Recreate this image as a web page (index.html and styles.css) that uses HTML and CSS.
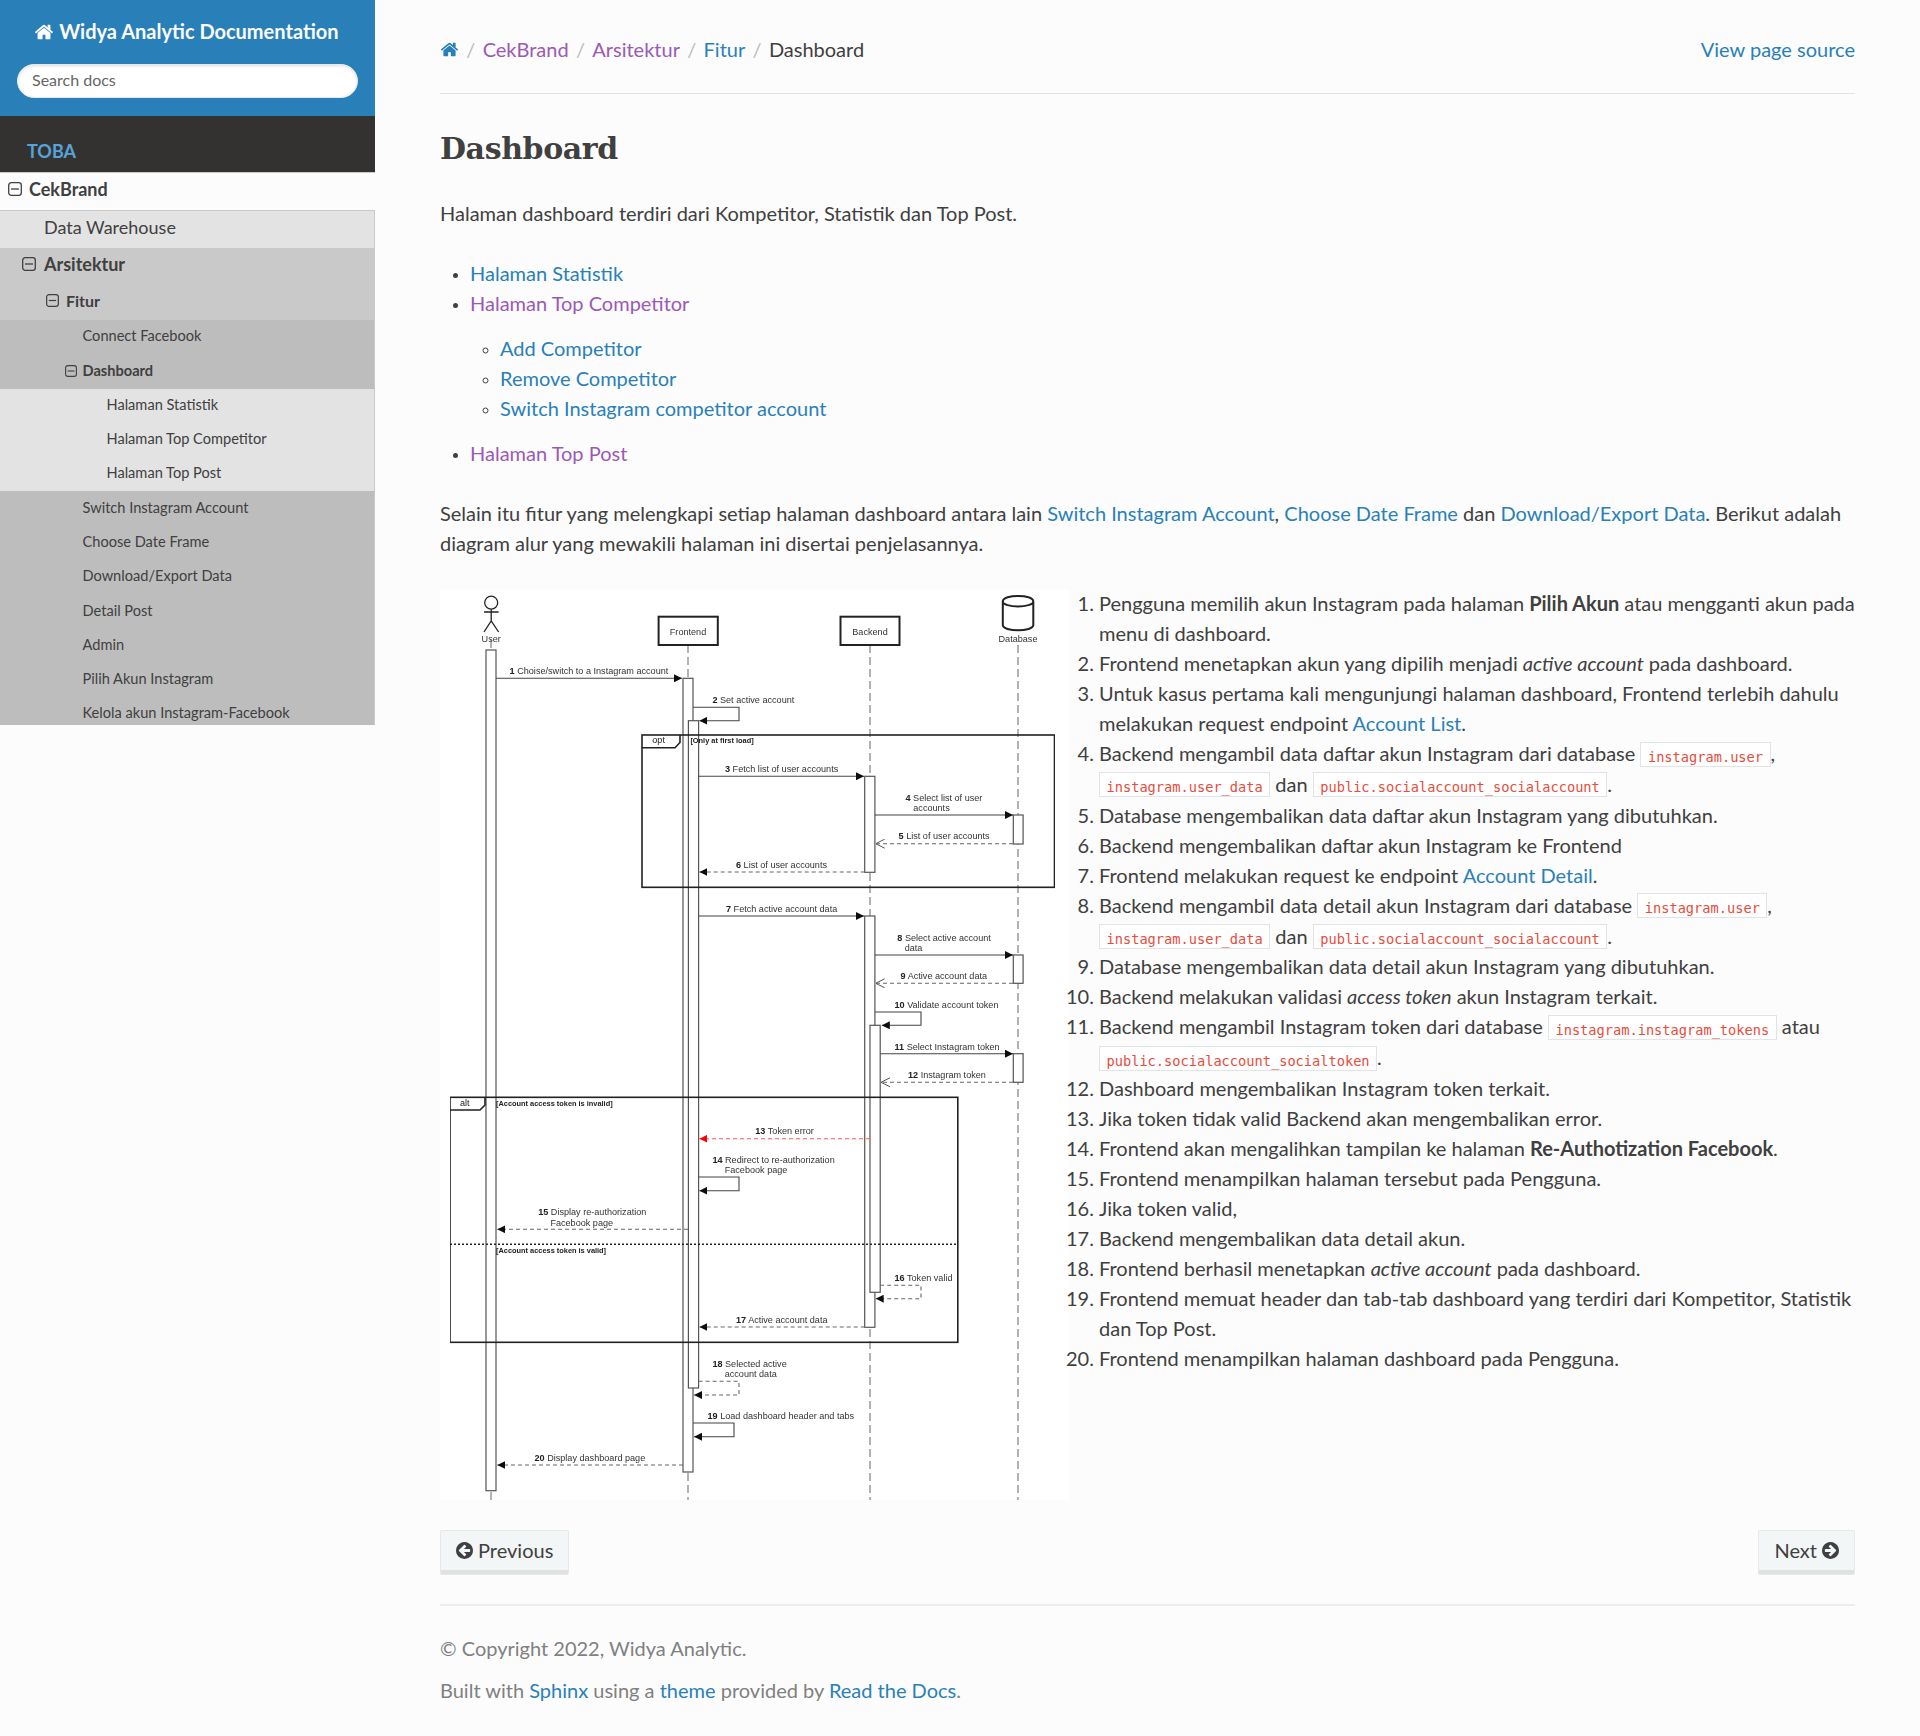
FILE: index.html

```html
<!DOCTYPE html>
<html lang="en">
<head>
    <meta charset="UTF-8">
    <meta name="viewport" content="width=device-width, initial-scale=1.0">
    <title>Dashboard - Widya Analytic Documentation</title>
    <link rel="stylesheet" href="styles.css">
</head>
<body>
  <svg class="defs">
    <symbol id="i-minus" viewBox="0 0 14 14">
      <rect x="0.7" y="0.7" width="12.6" height="12.6" rx="2.6" fill="none" stroke="currentColor" stroke-width="1.3"/>
      <path d="M3 7h8" stroke="currentColor" stroke-width="1.3"/>
    </symbol>
    <symbol id="i-home" viewBox="0 0 1792 1792">
      <path fill="currentColor" d="M1472 992v480q0 26-19 45t-45 19h-384v-384h-256v384h-384q-26 0-45-19t-19-45v-480q0-1 .5-3t.5-3l575-474 575 474q1 2 1 6zm223-69l-62 74q-8 9-21 11h-3q-13 0-21-7l-692-577-692 577q-12 8-24 7-13-2-21-11l-62-74q-8-10-7-23.5t11-21.5l719-599q32-26 76-26t76 26l244 204v-195q0-14 9-23t23-9h192q14 0 23 9t9 23v408l219 182q10 8 11 21.5t-7 23.5z"/>
    </symbol>
  </svg>

  <div class="sidebar">
    <div class="side-search">
      <a class="brand" href="#"><svg class="brand-icon"><use href="#i-home"/></svg> Widya Analytic Documentation</a>
      <input class="search-input" type="text" placeholder="Search docs">
    </div>
    <div class="side-menu">
      <p class="caption">TOBA</p>
      <a class="row l1" href="#"><svg class="toggle"><use href="#i-minus"/></svg>CekBrand</a>
      <a class="row l2 plain" href="#">Data Warehouse</a>
      <a class="row l2" href="#"><svg class="toggle"><use href="#i-minus"/></svg>Arsitektur</a>
      <a class="row l3" href="#"><svg class="toggle"><use href="#i-minus"/></svg>Fitur</a>
      <a class="row l4" href="#">Connect Facebook</a>
      <a class="row l4 open" href="#"><svg class="toggle"><use href="#i-minus"/></svg>Dashboard</a>
      <a class="row l5" href="#">Halaman Statistik</a>
      <a class="row l5" href="#">Halaman Top Competitor</a>
      <a class="row l5" href="#">Halaman Top Post</a>
      <a class="row l4" href="#">Switch Instagram Account</a>
      <a class="row l4" href="#">Choose Date Frame</a>
      <a class="row l4" href="#">Download/Export Data</a>
      <a class="row l4" href="#">Detail Post</a>
      <a class="row l4" href="#">Admin</a>
      <a class="row l4" href="#">Pilih Akun Instagram</a>
      <a class="row l4" href="#">Kelola akun Instagram-Facebook</a>
    </div>
  </div>

  <div class="content">
    <div class="crumbs">
      <a href="#" class="crumb-home"><svg class="crumb-icon"><use href="#i-home"/></svg></a>
      <span class="sep">/</span>
      <a href="#" class="visited">CekBrand</a>
      <span class="sep">/</span>
      <a href="#" class="visited">Arsitektur</a>
      <span class="sep">/</span>
      <a href="#">Fitur</a>
      <span class="sep">/</span>
      <span>Dashboard</span>
      <a href="#" class="source">View page source</a>
    </div>
    <hr class="rule">

    <h1>Dashboard</h1>
    <p>Halaman dashboard terdiri dari Kompetitor, Statistik dan Top Post.</p>

    <ul class="links">
      <li><a href="#">Halaman Statistik</a></li>
      <li><a href="#" class="visited">Halaman Top Competitor</a>
        <ul>
          <li><a href="#">Add Competitor</a></li>
          <li><a href="#">Remove Competitor</a></li>
          <li><a href="#">Switch Instagram competitor account</a></li>
        </ul>
      </li>
      <li><a href="#" class="visited">Halaman Top Post</a></li>
    </ul>

    <p>Selain itu fitur yang melengkapi setiap halaman dashboard antara lain <a href="#">Switch Instagram Account</a>, <a href="#">Choose Date Frame</a> dan <a href="#">Download/Export Data</a>. Berikut adalah diagram alur yang mewakili halaman ini disertai penjelasannya.</p>

    <div class="flow">
      <svg class="seq" viewBox="440 590 629 910" role="img" aria-label="Sequence diagram">
        <defs>
          <filter id="soft" x="0" y="0" width="100%" height="100%"><feGaussianBlur stdDeviation="0.35"/></filter>
          <marker id="solid" viewBox="0 0 8 8" refX="8" refY="4" markerWidth="8" markerHeight="8" markerUnits="userSpaceOnUse" orient="auto"><path d="M0 0L8 4L0 8z" fill="#111"/></marker>
          <marker id="red" viewBox="0 0 8 8" refX="8" refY="4" markerWidth="8" markerHeight="8" markerUnits="userSpaceOnUse" orient="auto"><path d="M0 0L8 4L0 8z" fill="#f00"/></marker>
          <marker id="open" viewBox="0 0 9 10" refX="9" refY="5" markerWidth="9" markerHeight="10" markerUnits="userSpaceOnUse" orient="auto"><path d="M0 0.5L9 5L0 9.5" fill="none" stroke="#555" stroke-width="1"/></marker>
        </defs>
        <g filter="url(#soft)">
          <!-- lifelines -->
          <path class="life" d="M491 640V1501M688 645V1501M870 645V1501M1018 645V1501"/>

          <!-- actors -->
          <circle class="shape" cx="491.2" cy="602.7" r="6.5"/>
          <path class="shape" d="M491.2 609.2V621M484 612H498.6M484 632L491.2 621L498.6 632"/>
          <text class="lbl" x="491.2" y="642" text-anchor="middle">User</text>
          <rect class="box" x="658.6" y="616.7" width="59.2" height="28.3"/>
          <text class="lbl" x="688" y="635" text-anchor="middle">Frontend</text>
          <rect class="box" x="840.5" y="616.7" width="59" height="28.3"/>
          <text class="lbl" x="870" y="635" text-anchor="middle">Backend</text>
          <path class="box" d="M1002.8 601.5V625C1002.8 632 1033.3 632 1033.3 625V601.5C1033.3 594 1002.8 594 1002.8 601.5C1002.8 608 1033.3 608 1033.3 601.5"/>
          <text class="lbl" x="1018" y="642" text-anchor="middle">Database</text>

          <!-- activations -->
          <rect class="act" x="486" y="650" width="10" height="840.7"/>
          <rect class="act" x="683" y="678.3" width="10" height="793.7"/>
          <rect class="act" x="688.4" y="720.7" width="10.2" height="667.3"/>
          <rect class="act" x="864.7" y="776.3" width="10.2" height="96"/>
          <rect class="act" x="1013.3" y="815" width="9.8" height="29"/>
          <rect class="act" x="864.7" y="916" width="10.2" height="411.3"/>
          <rect class="act" x="1013.3" y="955" width="9.8" height="28.3"/>
          <rect class="act" x="870" y="1025.3" width="10.2" height="267"/>
          <rect class="act" x="1013.3" y="1053.7" width="9.8" height="28.6"/>

          <!-- frames -->
          <rect class="frame" x="642" y="735" width="412.5" height="152.3"/>
          <path class="frame" d="M642 747.7H675L680 742.5V735"/>
          <text class="lbl tag" x="658.6" y="743.3" text-anchor="middle">opt</text>
          <text class="lbl guard" x="690.4" y="743.3">[Only at first load]</text>
          <rect class="frame" x="450" y="1097.3" width="507.8" height="245"/>
          <path class="frame" d="M450 1110H480L485 1105V1097.3"/>
          <text class="lbl tag" x="464.7" y="1105.7" text-anchor="middle">alt</text>
          <text class="lbl guard" x="496" y="1105.7">[Account access token is invalid]</text>
          <path class="dots" d="M450 1244.3H957.8"/>
          <text class="lbl guard" x="496" y="1253.3">[Account access token is valid]</text>

          <!-- messages -->
          <path class="msg" d="M496 678.3H682" marker-end="url(#solid)"/>
          <text class="lbl" x="509.6" y="674"><tspan class="num">1</tspan> Choise/switch to a Instagram account</text>
          <path class="msg" d="M693 707.3H739V720.7H699.4" marker-end="url(#solid)"/>
          <text class="lbl" x="712.4" y="703"><tspan class="num">2</tspan> Set active account</text>
          <path class="msg" d="M698.6 776.3H864" marker-end="url(#solid)"/>
          <text class="lbl" x="725" y="772.3"><tspan class="num">3</tspan> Fetch list of user accounts</text>
          <path class="msg" d="M875 815H1013" marker-end="url(#solid)"/>
          <text class="lbl" x="905.5" y="800.7"><tspan class="num">4</tspan> Select list of user</text>
          <text class="lbl" x="913.3" y="810.7">accounts</text>
          <path class="ret" d="M1013 843.7H875.7" marker-end="url(#open)"/>
          <text class="lbl" x="898.6" y="839.3"><tspan class="num">5</tspan> List of user accounts</text>
          <path class="ret" d="M864.7 872H699.4" marker-end="url(#solid)"/>
          <text class="lbl" x="736" y="868.3"><tspan class="num">6</tspan> List of user accounts</text>
          <path class="msg" d="M698.6 916H864" marker-end="url(#solid)"/>
          <text class="lbl" x="726" y="912.3"><tspan class="num">7</tspan> Fetch active account data</text>
          <path class="msg" d="M875 955H1013" marker-end="url(#solid)"/>
          <text class="lbl" x="897.3" y="940.7"><tspan class="num">8</tspan> Select active account</text>
          <text class="lbl" x="904.7" y="950.7">data</text>
          <path class="ret" d="M1013 983.3H875.7" marker-end="url(#open)"/>
          <text class="lbl" x="900.6" y="979.3"><tspan class="num">9</tspan> Active account data</text>
          <path class="msg" d="M875 1012H921V1025.3H881.8" marker-end="url(#solid)"/>
          <text class="lbl" x="894.5" y="1008"><tspan class="num">10</tspan> Validate account token</text>
          <path class="msg" d="M880.2 1053.7H1013" marker-end="url(#solid)"/>
          <text class="lbl" x="894.5" y="1050"><tspan class="num">11</tspan> Select Instagram token</text>
          <path class="ret" d="M1013 1082.3H881" marker-end="url(#open)"/>
          <text class="lbl" x="908" y="1078.3"><tspan class="num">12</tspan> Instagram token</text>
          <path class="ret err" d="M870 1138.7H699.4" marker-end="url(#red)"/>
          <text class="lbl" x="755.3" y="1134.3"><tspan class="num">13</tspan> Token error</text>
          <path class="msg" d="M698.6 1177H739V1190.7H699.4" marker-end="url(#solid)"/>
          <text class="lbl" x="712.4" y="1163.3"><tspan class="num">14</tspan> Redirect to re-authorization</text>
          <text class="lbl" x="724.7" y="1173.3">Facebook page</text>
          <path class="ret" d="M688 1229.3H497.3" marker-end="url(#solid)"/>
          <text class="lbl" x="538.2" y="1215"><tspan class="num">15</tspan> Display re-authorization</text>
          <text class="lbl" x="550.4" y="1225.7">Facebook page</text>
          <path class="ret" d="M880.2 1285.3H921V1298.7H875.7" marker-end="url(#solid)"/>
          <text class="lbl" x="894.5" y="1281"><tspan class="num">16</tspan> Token valid</text>
          <path class="ret" d="M864.7 1327H699.4" marker-end="url(#solid)"/>
          <text class="lbl" x="736" y="1323.3"><tspan class="num">17</tspan> Active account data</text>
          <path class="ret" d="M698.6 1381.3H739V1395H694" marker-end="url(#solid)"/>
          <text class="lbl" x="712.4" y="1367.3"><tspan class="num">18</tspan> Selected active</text>
          <text class="lbl" x="724.7" y="1377.3">account data</text>
          <path class="msg" d="M693 1423H734V1436.7H694" marker-end="url(#solid)"/>
          <text class="lbl" x="707.5" y="1419.3"><tspan class="num">19</tspan> Load dashboard header and tabs</text>
          <path class="ret" d="M683 1465H497.3" marker-end="url(#solid)"/>
          <text class="lbl" x="534.5" y="1461"><tspan class="num">20</tspan> Display dashboard page</text>
        </g>
      </svg>

      <ol class="steps">
        <li>Pengguna memilih akun Instagram pada halaman <strong>Pilih Akun</strong> atau mengganti akun pada menu di dashboard.</li>
        <li>Frontend menetapkan akun yang dipilih menjadi <em>active account</em> pada dashboard.</li>
        <li>Untuk kasus pertama kali mengunjungi halaman dashboard, Frontend terlebih dahulu melakukan request endpoint <a href="#">Account List</a>.</li>
        <li>Backend mengambil data daftar akun Instagram dari database <code>instagram.user</code>, <code>instagram.user_data</code> dan <code>public.socialaccount_socialaccount</code>.</li>
        <li>Database mengembalikan data daftar akun Instagram yang dibutuhkan.</li>
        <li>Backend mengembalikan daftar akun Instagram ke Frontend</li>
        <li>Frontend melakukan request ke endpoint <a href="#">Account Detail</a>.</li>
        <li>Backend mengambil data detail akun Instagram dari database <code>instagram.user</code>, <code>instagram.user_data</code> dan <code>public.socialaccount_socialaccount</code>.</li>
        <li>Database mengembalikan data detail akun Instagram yang dibutuhkan.</li>
        <li>Backend melakukan validasi <em>access token</em> akun Instagram terkait.</li>
        <li>Backend mengambil Instagram token dari database <code>instagram.instagram_tokens</code> atau <code>public.socialaccount_socialtoken</code>.</li>
        <li>Dashboard mengembalikan Instagram token terkait.</li>
        <li>Jika token tidak valid Backend akan mengembalikan error.</li>
        <li>Frontend akan mengalihkan tampilan ke halaman <strong>Re-Authotization Facebook</strong>.</li>
        <li>Frontend menampilkan halaman tersebut pada Pengguna.</li>
        <li>Jika token valid,</li>
        <li>Backend mengembalikan data detail akun.</li>
        <li>Frontend berhasil menetapkan <em>active account</em> pada dashboard.</li>
        <li>Frontend memuat header dan tab-tab dashboard yang terdiri dari Kompetitor, Statistik dan Top Post.</li>
        <li>Frontend menampilkan halaman dashboard pada Pengguna.</li>
      </ol>
    </div>

    <div class="pager">
      <a href="#" class="btn">
        <svg class="btn-icon" viewBox="0 128 1536 1536"><path fill="currentColor" d="M1280 960v-128q0-26-19-45t-45-19h-502l189-189q19-19 19-45t-19-45l-91-91q-18-18-45-18t-45 18l-362 362-91 91q-18 18-18 45t18 45l91 91 362 362q18 18 45 18t45-18l91-91q18-18 18-45t-18-45l-189-189h502q26 0 45-19t19-45zm256-64q0 209-103 385.5t-279.5 279.5-385.5 103-385.5-103-279.5-279.5-103-385.5 103-385.5 279.5-279.5 385.5-103 385.5 103 279.5 279.5 103 385.5z"/></svg>
        Previous
      </a>
      <a href="#" class="btn">
        Next
        <svg class="btn-icon" viewBox="0 128 1536 1536"><path fill="currentColor" d="M1285 896q0-27-18-45l-91-91-362-362q-18-18-45-18t-45 18l-91 91q-18 18-18 45t18 45l189 189h-502q-26 0-45 19t-19 45v128q0 26 19 45t45 19h502l-189 189q-19 19-19 45t19 45l91 91q18 18 45 18t45-18l362-362 91-91q18-18 18-45zm251 0q0 209-103 385.5t-279.5 279.5-385.5 103-385.5-103-279.5-279.5-103-385.5 103-385.5 279.5-279.5 385.5-103 385.5 103 279.5 279.5 103 385.5z"/></svg>
      </a>
    </div>
    <hr class="rule foot-rule">

    <div class="footer">
      <p>&copy; Copyright 2022, Widya Analytic.</p>
      <p>Built with <a href="#">Sphinx</a> using a <a href="#">theme</a> provided by <a href="#">Read the Docs</a>.</p>
    </div>
  </div>
</body>
</html>
```

FILE: styles.css

```css
* {
    box-sizing: border-box;
}

body {
    margin: 0;
    display: flex;
    align-items: flex-start;
    min-height: 1736px;
    background-color: #fcfcfc;
    color: #404040;
    font-family: 'Lato', sans-serif;
    font-size: 20px;
    line-height: 30px;
}

a {
    color: #2980b9;
    text-decoration: none;
}

a.visited {
    color: #9b59b6;
}

.defs {
    position: absolute;
    width: 0;
    height: 0;
}

/* sidebar */
.sidebar {
    width: 375px;
    flex-shrink: 0;
}

.side-search {
    height: 116px;
    padding: 16px 17px 0;
    background-color: #2980b9;
    text-align: center;
}

.brand {
    display: block;
    margin: 0 2px 18px 0;
    color: #fcfcfc;
    font-size: 20px;
    font-weight: 700;
    line-height: 30px;
}

.brand-icon {
    width: 20px;
    height: 20px;
    vertical-align: -3px;
}

.search-input {
    display: block;
    width: 100%;
    height: 34px;
    padding: 0 14px 4px;
    border: 1px solid #e8e8e8;
    border-radius: 17px;
    background-color: #fff;
    box-shadow: inset 0 1px 3px #ddd;
    font-family: 'Lato', sans-serif;
    font-size: 16px;
    color: #404040;
}

.search-input::placeholder {
    color: #666;
    opacity: 1;
}

.side-menu {
    height: 609px;
    overflow: hidden;
}

.caption {
    height: 56px;
    margin: 0;
    padding: 20px 0 0 27px;
    background-color: #343131;
    color: #55a5d9;
    font-size: 18px;
    font-weight: 700;
    line-height: 30px;
}

.row {
    display: flex;
    align-items: center;
    padding-bottom: 4px;
    color: #404040;
    border-right: 1px solid #c9c9c9;
}

.toggle {
    flex-shrink: 0;
}

.l1 {
    height: 39px;
    padding-left: 8px;
    padding-bottom: 5px;
    gap: 7px;
    background-color: #fcfcfc;
    border-top: 1px solid #c9c9c9;
    border-bottom: 1px solid #c9c9c9;
    border-right: 0;
    font-size: 18px;
    font-weight: 700;
}

.l1 .toggle {
    width: 14px;
    height: 14px;
}

.l2 {
    height: 37px;
    padding-left: 22px;
    padding-bottom: 5px;
    gap: 8px;
    background-color: #c9c9c9;
    font-size: 18px;
    font-weight: 700;
}

.l2 .toggle {
    width: 14px;
    height: 14px;
}

.l2.plain {
    padding-left: 44px;
    background-color: #e3e3e3;
    font-weight: 400;
}

.l3 {
    height: 35px;
    padding-left: 46px;
    gap: 7px;
    background-color: #c9c9c9;
    font-size: 16px;
    font-weight: 700;
}

.l3 .toggle {
    width: 13px;
    height: 13px;
}

.l4 {
    height: 34.3px;
    padding-left: 82.5px;
    padding-bottom: 1.9px;
    background-color: #bdbdbd;
    font-size: 14.6px;
    font-weight: 400;
}

.l4.open {
    padding-left: 65px;
    gap: 5.5px;
    font-weight: 700;
}

.l4 .toggle {
    width: 12px;
    height: 12px;
}

.l5 {
    height: 34.3px;
    padding-left: 106.5px;
    padding-bottom: 1.9px;
    background-color: #e3e3e3;
    font-size: 14.6px;
}

/* main column */
.content {
    width: 1545px;
    padding: 34px 65px 0;
}

.crumbs {
    display: flex;
    align-items: center;
    gap: 7.3px;
    height: 30px;
}

.crumb-icon {
    display: block;
    width: 19px;
    height: 19px;
}

.sep {
    color: #bbb;
}

.source {
    margin-left: auto;
}

.rule {
    height: 1px;
    margin: 29px 0 0;
    border: 0;
    background-color: #e1e4e5;
}

h1 {
    margin: 33px 0 27px;
    font-family: 'DejaVu Serif', serif;
    font-size: 30px;
    font-weight: 700;
    letter-spacing: -0.4px;
    line-height: 44px;
}

p {
    margin: 0 0 30px;
}

.links {
    margin: 0 0 30px;
    padding-left: 30px;
    list-style: disc;
}

.links ul {
    margin: 15px 0;
    padding-left: 30px;
    list-style: circle;
}

.links li::marker {
    font-size: 15px;
}

.flow {
    display: flex;
    align-items: flex-start;
}

.seq {
    flex-shrink: 0;
    width: 629px;
    height: 910px;
    margin-top: 2px;
    background-color: #fff;
}

.shape,
.box,
.act,
.msg,
.ret,
.life,
.frame,
.dots {
    fill: none;
}

.shape {
    stroke: #222;
    stroke-width: 1.3;
}

.box {
    stroke: #222;
    stroke-width: 2;
    fill: #fff;
}

.life {
    stroke: #666;
    stroke-width: 1;
    stroke-dasharray: 8 4;
}

.act {
    fill: #fff;
    stroke: #555;
    stroke-width: 1.2;
}

.frame {
    stroke: #222;
    stroke-width: 1.6;
}

.dots {
    stroke: #222;
    stroke-width: 1.6;
    stroke-dasharray: 2 2;
}

.msg {
    stroke: #444;
    stroke-width: 1.1;
}

.ret {
    stroke: #666;
    stroke-width: 1.1;
    stroke-dasharray: 4 3;
}

.err {
    stroke: #f55;
}

.lbl {
    fill: #333;
    font-family: 'Liberation Sans', sans-serif;
    font-size: 9.1px;
}

.tag {
    fill: #222;
}

.guard {
    fill: #222;
    font-weight: 700;
    font-size: 7.4px;
}

.num {
    fill: #222;
    font-weight: 700;
}

.steps {
    flex: 1;
    margin: 0 -3px 0 0;
    padding-left: 30px;
}

code {
    padding: 5.5px 6.5px 1.5px;
    border: 1px solid #e1e4e5;
    background-color: #fff;
    color: #e74c3c;
    font-family: 'DejaVu Sans Mono', monospace;
    font-size: 13.66px;
    line-height: 23.85px;
    white-space: nowrap;
}

.pager {
    display: flex;
    justify-content: space-between;
    margin-top: 30px;
}

.btn {
    display: inline-flex;
    align-items: center;
    gap: 5px;
    height: 45px;
    padding: 0 15px 5px;
    border: 1px solid rgba(0, 0, 0, 0.05);
    border-radius: 2px;
    background-color: #f3f6f6;
    box-shadow: inset 0 -4px 0 rgba(0, 0, 0, 0.08);
    color: #404040;
}

.btn-icon {
    width: 17px;
    height: 17px;
}

.foot-rule {
    height: 2px;
    margin-top: 29px;
    background-color: #ededed;
}

.footer {
    margin-top: 27px;
    color: #808080;
}

.footer p {
    margin-bottom: 12px;
}
```
